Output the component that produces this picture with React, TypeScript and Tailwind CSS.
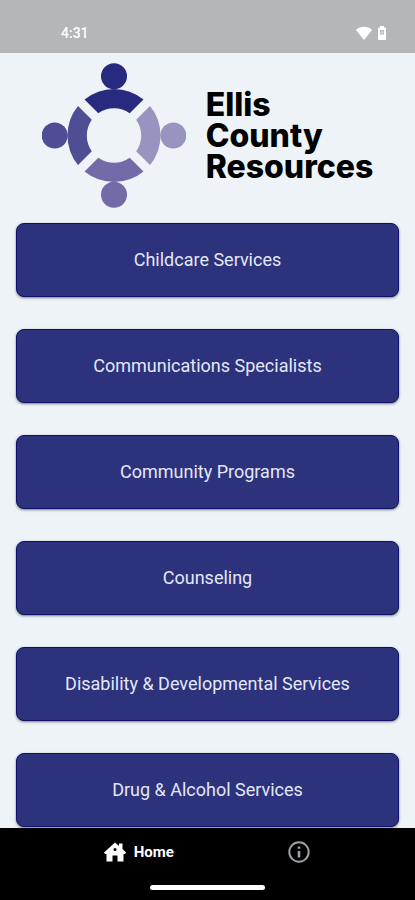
const services = [
  "Childcare Services",
  "Communications Specialists",
  "Community Programs",
  "Counseling",
  "Disability & Developmental Services",
  "Drug & Alcohol Services",
];

function StatusBar() {
  return (
    <div className="flex h-[53px] shrink-0 items-end justify-between bg-[#b4b6b8] pb-3 pl-[61px] pr-7 text-white">
      <span className="text-sm font-medium leading-4">4:31</span>
      <div className="flex h-4 items-center gap-1">
        <svg width="18" height="16" viewBox="0 0 18 16" fill="currentColor" aria-hidden="true">
          <path d="M1 5C5.500 .7 12.500 .7 17 5L9 15Z" />
        </svg>
        <svg width="10" height="16" viewBox="0 0 10 16" aria-hidden="true">
          <path d="M3 1h4v1.500h1q1 0 1 1V14q0 1-1 1H2q-1 0-1-1V3.500q0-1 1-1h1Z" fill="currentColor" />
          <path d="M3 5h4v4.500H3Z" fill="#b4b6b8" />
          <path d="M4.500 5h1v4.500h-1ZM3 6.800h4v1H3Z" fill="#d4d6d8" />
        </svg>
      </div>
    </div>
  );
}

function Logo() {
  const segment = "M-29.500-36A46.500 46.500 0 0 1 29.500-36L15.700-22.200A27.200 27.200 0 0 0-15.700-22.200Z";
  const people = [
    { angle: 0, color: "#282a80" },
    { angle: 90, color: "#9994bf" },
    { angle: 180, color: "#716ca8" },
    { angle: 270, color: "#4f4d94" },
  ];
  return (
    <svg width="144" height="145" viewBox="-72 -72.500 144 145" className="shrink-0" aria-hidden="true">
      {people.map(({ angle, color }) => (
        <g key={angle} transform={`rotate(${angle})`} fill={color}>
          <circle cy="-59.300" r="13" />
          <path d={segment} />
        </g>
      ))}
    </svg>
  );
}

export default function App() {
  return (
    <div className="flex h-screen flex-col bg-[#eef3f7] font-['Roboto','Liberation_Sans',sans-serif]">
      <StatusBar />
      <main className="min-h-0 flex-1 overflow-hidden">
        <header className="flex items-center justify-center gap-5 pb-[15px] pt-[10px]">
          <Logo />
          <h1 className="font-['Inter','Liberation_Sans',sans-serif] text-[32px] font-extrabold leading-[31px] text-black">
            Ellis
            <br />
            County
            <br />
            Resources
          </h1>
        </header>
        <div className="flex flex-col gap-8 px-4">
          {services.map((name) => (
            <button
              key={name}
              type="button"
              className="h-[74px] shrink-0 rounded-lg border border-[#10106c] bg-[#2c327c] text-lg text-[#e4e7f6] shadow-sm shadow-black/40"
            >
              {name}
            </button>
          ))}
        </div>
      </main>
      <nav className="flex h-[72px] shrink-0 flex-col items-center justify-between bg-black pb-[10px] pt-3">
        <div className="flex w-1/2 items-center justify-between">
          <a href="#home" className="flex items-center gap-2 text-white">
            <svg width="22" height="20" viewBox="0 0 22 20" fill="currentColor" aria-hidden="true">
              <path fillRule="evenodd" d="M11 .5 15 4V1.500h3.500v5.500L22 10.500l-1 1.500H19.500V19.500h-6v-6h-5v6h-6V12H1L0 10.500ZM11 6a1.500 1.500 0 1 0 0 3 1.500 1.500 0 0 0 0-3Z" />
            </svg>
            <span className="text-[15px] font-bold leading-6">Home</span>
          </a>
          <a href="#info" aria-label="Information" className="text-[#9da1a6]">
            <svg width="24" height="24" viewBox="0 0 24 24" fill="none" stroke="currentColor" strokeWidth="2" aria-hidden="true">
              <circle cx="12" cy="12" r="9.700" />
              <path d="M12 11v6.500M12 6.500v2.300" strokeWidth="2.600" />
            </svg>
          </a>
        </div>
        <div className="h-[5px] w-[115px] rounded-full bg-white" />
      </nav>
    </div>
  );
}
